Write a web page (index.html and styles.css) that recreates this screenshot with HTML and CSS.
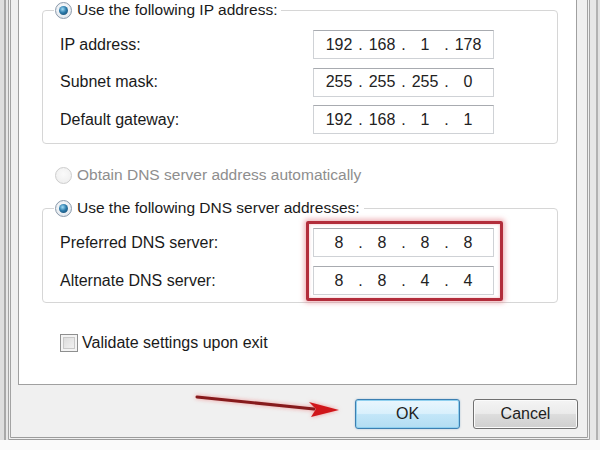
FILE: index.html
```html
<!DOCTYPE html>
<html lang="en">
<head>
  <meta charset="UTF-8" />
  <link rel="stylesheet" href="styles.css">
</head>
<body>
  <div class="screen">
    <div class="window">
      <div class="page">
        <fieldset class="group">
          <legend class="choice"><span class="radio checked"></span>Use the following IP address:</legend>
          <div class="fields">
            <span class="label">IP address:</span>
            <div class="ip"><span>192</span><i>.</i><span>168</span><i>.</i><span>1</span><i>.</i><span>178</span></div>
            <span class="label">Subnet mask:</span>
            <div class="ip"><span>255</span><i>.</i><span>255</span><i>.</i><span>255</span><i>.</i><span>0</span></div>
            <span class="label">Default gateway:</span>
            <div class="ip"><span>192</span><i>.</i><span>168</span><i>.</i><span>1</span><i>.</i><span>1</span></div>
          </div>
        </fieldset>

        <div class="choice standalone disabled"><span class="radio"></span>Obtain DNS server address automatically</div>

        <fieldset class="group dns">
          <legend class="choice"><span class="radio checked"></span>Use the following DNS server addresses:</legend>
          <div class="fields">
            <span class="label">Preferred DNS server:</span>
            <div class="ip"><span>8</span><i>.</i><span>8</span><i>.</i><span>8</span><i>.</i><span>8</span></div>
            <span class="label">Alternate DNS server:</span>
            <div class="ip"><span>8</span><i>.</i><span>8</span><i>.</i><span>4</span><i>.</i><span>4</span></div>
          </div>
        </fieldset>

        <div class="check-row"><span class="checkbox"></span>Validate settings upon exit</div>
      </div>

      <div class="buttons">
        <button class="btn default">OK</button>
        <button class="btn">Cancel</button>
      </div>
    </div>

    <!-- annotations drawn over the screenshot -->
    <div class="highlight"></div>
    <svg class="arrow" width="160" height="32" viewBox="0 0 160 32">
      <line x1="7" y1="7" x2="124" y2="19" stroke="#861a1c" stroke-width="3" stroke-linecap="round" />
      <polygon points="119,12 149,20 121,27 126,19" fill="#d0161a" />
    </svg>
  </div>
</body>
</html>
```

FILE: styles.css
```css
:root {
  --text: #1a1a1a;
  --text-disabled: #8e8e8e;
  --frame-line: #a3a3a3;
  --group-line: #d6d6d6;
  --font-base: 'Liberation Sans', Arial, sans-serif;
}
*, *::before, *::after { box-sizing: border-box; }
body {
  margin: 0;
  font-family: var(--font-base);
  font-size: 16px;
  color: var(--text);
}
.screen {
  position: relative;
  width: 600px;
  height: 450px;
  overflow: hidden;
  background-color: #fafafa;
  background-image: linear-gradient(90deg, #dedede 0 4px, #a8a8a8 4px 6px, #e7e7e7 6px 596px, #b2b2b2 596px 598px, #e2e2e2 598px);
  background-size: 100% 440px;
  background-repeat: no-repeat;
}
.window {
  width: 582px;
  height: 440px;
  margin-left: 8px;
  background: #f0f0f0;
  border-left: 3px double var(--frame-line);
  border-right: 3px double var(--frame-line);
  border-bottom: 3px double #9c9c9c;
  display: flex;
  flex-direction: column;
}
.page {
  margin: 0 10px 0 7px;
  padding: 0 18px 31px 23px;
  background: #fff;
  border: 1px solid #a0a0a0;
  border-top: none;
}

/* Group boxes */
.group {
  margin: 0;
  min-width: 0;
  padding: 10px 16px 9px 17px;
  border: 1px solid var(--group-line);
  border-radius: 4px;
}
.group.dns { margin-top: 13px; padding-bottom: 7px; }
.choice {
  display: flex;
  align-items: center;
  gap: 5px;
  height: 20px;
  line-height: 20px;
  font-size: 15.5px;
  white-space: nowrap;
}
legend.choice { margin-left: -6px; padding: 0 4px 0 1px; }
.choice.standalone { margin: 21px 0 0 13px; }
.choice.disabled { color: var(--text-disabled); }

.radio {
  position: relative;
  width: 17px;
  height: 17px;
  flex: none;
  border-radius: 50%;
  border: 1px solid #8b9aab;
  background: radial-gradient(circle at 50% 40%, #ffffff 0%, #e6ebf0 70%, #d3dae2 100%);
}
.radio.checked::after {
  content: "";
  position: absolute;
  left: 3px;
  top: 3px;
  width: 9px;
  height: 9px;
  border-radius: 50%;
  background: radial-gradient(circle at 40% 35%, #9fdcf6 0%, #2c7bab 45%, #123f63 100%);
}
.disabled .radio {
  border-color: #cdcdcd;
  background: radial-gradient(circle at 50% 40%, #fafafa 0%, #ececec 100%);
}

.fields {
  display: grid;
  grid-template-columns: 253px 181px;
  row-gap: 8.5px;
  align-items: center;
}
.dns .fields { row-gap: 9px; }
.label { line-height: 20px; white-space: nowrap; }

.ip {
  display: grid;
  grid-template-columns: 30px 13px 30px 13px 30px 13px 30px;
  align-items: center;
  height: 29px;
  padding-left: 10px;
  background: #fff;
  border: 1px solid #cfd2d6;
  border-top-color: #a8abb0;
  font-size: 16px;
  text-align: center;
  color: #222;
}
.ip i { font-style: normal; }

.check-row {
  display: flex;
  align-items: center;
  gap: 4px;
  height: 20px;
  margin: 30px 0 0 18px;
}
.checkbox {
  width: 18px;
  height: 18px;
  flex: none;
  border: 1px solid #8e8f8f;
  background: #f4f4f4;
  box-shadow: inset 0 0 0 2px #f4f4f4, inset 0 0 0 3px #c9c9c9;
  background-image: linear-gradient(135deg, #d6d6d6, #f8f8f8);
}

/* Dialog buttons */
.buttons {
  display: flex;
  justify-content: flex-end;
  gap: 13px;
  padding: 14px 9px 0 0;
}
.btn {
  width: 105px;
  height: 30px;
  font-family: var(--font-base);
  font-size: 16px;
  color: #1e1e1e;
  border: 1px solid #707070;
  border-radius: 3px;
  background: linear-gradient(#f4f4f4 0%, #ebebeb 48%, #dddddd 52%, #cfcfcf 100%);
  box-shadow: inset 0 0 0 1px #fbfbfb;
}
.btn.default {
  border-color: #3c7fb1;
  background: linear-gradient(#eaf6fd 0%, #d9f0fc 48%, #c2e6f8 52%, #b3ddf2 100%);
  box-shadow: inset 0 0 0 1px #8fd0ef, 0 0 2px rgba(60, 127, 177, 0.4);
}

/* Annotation overlays */
.highlight {
  position: absolute;
  left: 306px;
  top: 221px;
  width: 197px;
  height: 80px;
  border: 3px solid #b22d3b;
  border-radius: 2px;
  box-shadow: 0 0 5px 2px rgba(226, 120, 130, 0.55), inset 0 0 3px rgba(226, 120, 130, 0.5);
}
.arrow {
  position: absolute;
  left: 190px;
  top: 390px;
  filter: drop-shadow(0 0 2px rgba(240, 90, 90, 0.6));
}
```
